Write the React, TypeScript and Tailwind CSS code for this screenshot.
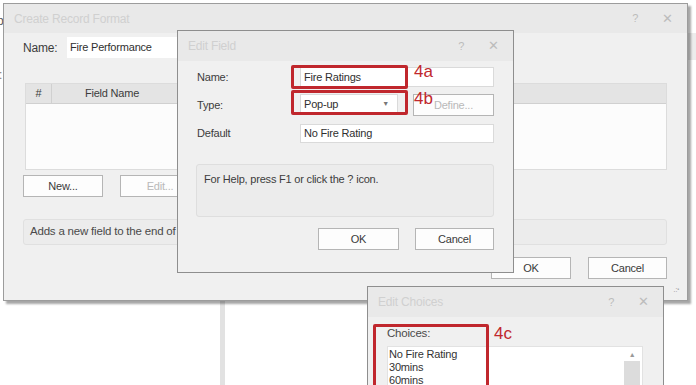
import React from 'react';

const font = "font-['Liberation_Sans',Arial,sans-serif] text-[11px] tracking-[-0.2px]";

// Title bar of an inactive Windows dialog
const TitleBar: React.FC<{ title: string; height?: string }> = ({ title, height = 'h-[29px]' }) => (
  <div className={`${height} bg-[#e9e9e9] flex items-center pl-[10px] pr-[14px]`}>
    <span className="text-[12px] text-[#d0d0d0]">{title}</span>
    <div className="ml-auto flex items-center gap-[24px] text-[#bcbcbc]">
      <span className="text-[11px]">?</span>
      <span className="text-[13px]">✕</span>
    </div>
  </div>
);

const Button: React.FC<{ label: string; disabled?: boolean; className?: string }> = ({ label, disabled, className = '' }) => (
  <div
    className={`h-[22px] bg-[#fdfdfd] border border-[#b5b5b5] flex items-center justify-center ${
      disabled ? 'text-[#b9b9b9]' : 'text-[#3a3a3a]'
    } ${className}`}
  >
    {label}
  </div>
);

const CreateRecordFormat: React.FC = () => (
  <div className="absolute left-[3px] top-[3px] w-[685px] h-[298px] bg-[#f0f0f0] border border-[#9c9c9c] shadow-[3px_3px_2px_rgba(0,0,0,0.35)] flex flex-col">
    <TitleBar title="Create Record Format" />
    <div className="flex-1 flex flex-col pl-[19px] pr-[20px]">
      {/* Name row */}
      <div className="mt-[4px] flex items-center h-[21px]">
        <span className="w-[44px] text-[#3c3c3c] text-[12px]">Name:</span>
        <div className="w-[240px] h-[21px] bg-white flex items-center pl-[3px] text-[#2f2f2f]">Fire Performance</div>
      </div>

      {/* Field table */}
      <div className="mt-[25px] ml-[2px] border border-[#dcdcdc] bg-[#fcfcfc] h-[87px] flex flex-col">
        <div className="h-[20px] bg-[#e4e4e4] border-b border-[#d0d0d0] flex text-[#3c3c3c]">
          <div className="w-[26px] border-r border-[#d0d0d0] flex items-center justify-center">#</div>
          <div className="w-[120px] flex items-center justify-center">Field Name</div>
        </div>
      </div>

      {/* New / Edit */}
      <div className="mt-[5px] flex gap-[17px]">
        <Button label="New..." className="w-[80px]" />
        <Button label="Edit..." disabled className="w-[80px]" />
      </div>

      {/* Status text */}
      <div className="mt-[22px] h-[26px] rounded-[3px] border border-[#e0e0e0] bg-[#ececec] flex items-center pl-[6px] text-[#4a4a4a] text-[11.5px]">
        Adds a new field to the end of the list.
      </div>

      {/* OK / Cancel */}
      <div className="mt-[12px] flex justify-end gap-[17px]">
        <Button label="OK" className="w-[80px]" />
        <Button label="Cancel" className="w-[79px]" />
      </div>
    </div>
    <span className="absolute right-[8px] bottom-[6px] text-[8px] leading-none text-[#9a9a9a]">.:ꞏ</span>
  </div>
);

const EditField: React.FC = () => (
  <div className="absolute left-[177px] top-[30px] w-[337px] h-[243px] bg-[#f0f0f0] border border-[#8e8e8e] flex flex-col">
    <TitleBar title="Edit Field" height="h-[30px]" />
    <div className="flex-1 flex flex-col pl-[19px] pr-[19px] text-[#3c3c3c]">
      <div className="mt-[6px] grid grid-cols-[103px_1fr] gap-y-[7px] items-center">
        <span>Name:</span>
        <div className="h-[20px] bg-white border border-[#dadada] flex items-center pl-[3px] text-[#2f2f2f]">Fire Ratings</div>
        <span>Type:</span>
        <div className="flex gap-[15px]">
          <div className="w-[98px] h-[21px] bg-white border border-[#dadada] flex items-center pl-[3px] pr-[8px] text-[#2f2f2f]">
            Pop-up
            <span className="ml-auto text-[7px] text-[#777]">▼</span>
          </div>
          <Button label="Define..." disabled className="flex-1 h-[21px]" />
        </div>
        <span className="mt-[1px]">Default</span>
        <div className="mt-[1px] h-[19px] bg-white border border-[#dadada] flex items-center pl-[3px] text-[#2f2f2f]">No Fire Rating</div>
      </div>

      <div className="mt-[21px] ml-[-1px] h-[53px] rounded-[3px] border border-[#dedede] bg-[#ececec] pl-[7px] pt-[6px] text-[#3c3c3c]">
        For Help, press F1 or click the ? icon.
      </div>

      <div className="mt-[11px] flex justify-end gap-[16px]">
        <Button label="OK" className="w-[81px]" />
        <Button label="Cancel" className="w-[79px]" />
      </div>
    </div>

    {/* annotations */}
    <div className="absolute left-[113px] top-[34px] w-[117px] h-[24px] border-[3px] border-[#c0272d] rounded-[2px]" />
    <div className="absolute left-[113px] top-[59px] w-[117px] h-[25px] border-[3px] border-[#c0272d] rounded-[2px]" />
    <span className="absolute left-[236px] top-[28px] text-[17px] tracking-normal text-[#c0272d]">4a</span>
    <span className="absolute left-[236px] top-[55px] text-[17px] tracking-normal text-[#c0272d]">4b</span>
  </div>
);

const EditChoices: React.FC = () => (
  <div className="absolute left-[367px] top-[286px] w-[297px] h-[130px] bg-[#f0f0f0] border border-[#8e8e8e] flex flex-col">
    <TitleBar title="Edit Choices" height="h-[30px]" />
    <div className="flex-1 flex flex-col pl-[19px] pr-[20px]">
      <span className="mt-[8px] text-[#4a4a4a] text-[11.5px]">Choices:</span>
      <div className="mt-[4px] flex-1 bg-white border border-[#e2e2e2] flex">
        <div className="flex-1 pl-[1px] pt-[1px] leading-[13px] text-[#333]">
          <div>No Fire Rating</div>
          <div>30mins</div>
          <div>60mins</div>
        </div>
        <div className="w-[16px] mr-[2px] flex flex-col items-center">
          <span className="text-[7px] text-[#999] leading-none mt-[4px]">▲</span>
          <div className="mt-[3px] w-full flex-1 bg-[#dcdcdc]" />
        </div>
      </div>
    </div>

    <div className="absolute left-[5px] top-[37px] w-[116px] h-[90px] border-[3px] border-[#c0272d] rounded-[2px]" />
    <span className="absolute left-[126px] top-[34px] text-[17px] tracking-normal text-[#c0272d]">4c</span>
  </div>
);

const App: React.FC = () => {
  return (
    <div className={`relative w-[696px] h-[385px] overflow-hidden bg-white ${font}`}>
      {/* page behind the dialogs */}
      <span className="absolute left-[-3px] top-[12px] text-[12px] text-[#555]">p</span>
      <span className="absolute left-[-1px] top-[66px] text-[12px] text-[#777]">:</span>
      <div className="absolute left-[687px] top-[33px] w-[9px] h-[27px] bg-[#ececec]" />
      <div className="absolute left-[220px] top-[300px] w-[5px] h-[85px] bg-[#e2e2e2]" />

      <CreateRecordFormat />
      <EditField />
      <EditChoices />
    </div>
  );
};

export default App;
